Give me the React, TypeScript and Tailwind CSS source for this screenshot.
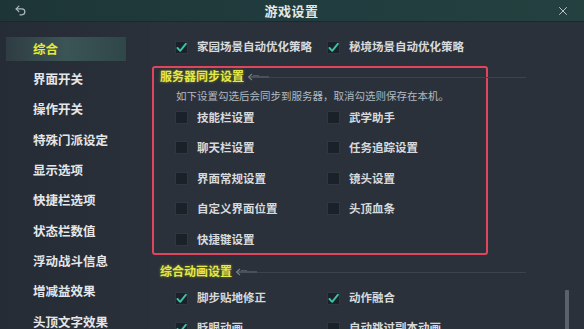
import { Undo2, X } from "lucide-react";

type Opt = { label: string; checked: boolean };

const menu = ["综合", "界面开关", "操作开关", "特殊门派设定", "显示选项", "快捷栏选项", "状态栏数值", "浮动战斗信息", "增减益效果", "头顶文字效果"];

const syncLeft: Opt[] = [
  { label: "技能栏设置", checked: false },
  { label: "聊天栏设置", checked: false },
  { label: "界面常规设置", checked: false },
  { label: "自定义界面位置", checked: false },
  { label: "快捷键设置", checked: false },
];
const syncRight: Opt[] = [
  { label: "武学助手", checked: false },
  { label: "任务追踪设置", checked: false },
  { label: "镜头设置", checked: false },
  { label: "头顶血条", checked: false },
];

function Box({ checked }: { checked: boolean }) {
  return (
    <div className="w-[13px] h-[13px] shrink-0 bg-[#1a2129] border border-[#2f3740] flex items-center justify-center">
      {checked && (
        <svg width="11" height="11" viewBox="0 0 11 11">
          <path d="M1.5 6 L4.2 8.8 L9.8 1.8" fill="none" stroke="#3cc4a4" strokeWidth="1.9" strokeLinecap="round" strokeLinejoin="round" />
        </svg>
      )}
    </div>
  );
}

function Check({ o }: { o: Opt }) {
  return (
    <div className="flex items-center gap-[9px]">
      <Box checked={o.checked} />
      <span className="text-[11.5px] font-semibold text-[#d6dadd] leading-none whitespace-nowrap">{o.label}</span>
    </div>
  );
}

function SectionTitle({ text }: { text: string }) {
  return (
    <div className="flex items-center h-[16px] w-[366px]">
      <span className="text-[12px] font-bold text-[#e4e84a] leading-none [text-shadow:0_0_3px_rgba(170,170,20,0.7)]">{text}</span>
      <svg width="22" height="8" viewBox="0 0 22 8" className="ml-[3px] mt-[2px] shrink-0">
        <path d="M5 1 L1.5 4 L5 7" fill="none" stroke="#7b828a" strokeWidth="1.1" />
        <path d="M2 4 L22 4" stroke="#6b7279" strokeWidth="1" />
        <path d="M6 2.5 L12 2.5" stroke="#5b6269" strokeWidth="0.8" />
      </svg>
      <div className="flex-1 h-px bg-[#3c434c] mt-[2px]" />
    </div>
  );
}

export default function App() {
  return (
    <div className="w-[584px] h-[329px] overflow-hidden bg-[#2b313a] flex flex-col" style={{ fontFamily: '"Noto Sans CJK SC", "Noto Sans", sans-serif' }}>
      <header className="h-[22px] shrink-0 flex items-center justify-between px-[14px] bg-gradient-to-r from-[#1d3536] via-[#213c3e] to-[#24403f] border-b border-[#1a2a2c]">
        <Undo2 size={13} strokeWidth={2.2} className="text-[#aebcbc]" />
        <span className="text-[13px] font-bold text-[#e2e8e8] tracking-[0.5px]">游戏设置</span>
        <X size={14} strokeWidth={1.6} className="text-[#c8d0d0]" />
      </header>

      <div className="flex flex-1 min-h-0">
        <aside className="w-[150px] shrink-0 flex flex-col pt-[12px] bg-gradient-to-r from-[#262c35] to-[#2a3039]">
          {menu.map((m, i) => (
            <div key={m} className="h-[30.3px] shrink-0 flex items-center relative">
              {i === 0 && (
                <div className="absolute left-[6px] w-[120px] top-[3px] bottom-[3px] bg-gradient-to-r from-[#2f3d42] via-[#3b5455] to-[#30474a]" />
              )}
              <span className={`relative pl-[33px] text-[12.5px] font-bold leading-none ${i === 0 ? "text-[#e6e83a]" : "text-[#e4e7ea]"}`}>{m}</span>
            </div>
          ))}
        </aside>

        <main className="flex-1 flex">
          <div className="flex-1 flex flex-col">
            <div className="mt-[15px] h-[20px] shrink-0 flex items-center pl-[25px]">
              <div className="w-[152px]"><Check o={{ label: "家园场景自动优化策略", checked: true }} /></div>
              <Check o={{ label: "秘境场景自动优化策略", checked: true }} />
            </div>

            <div className="mt-[9px] ml-[2px] w-[336px] h-[189px] shrink-0 border-2 border-[#e0455e] rounded-[3px] flex flex-col">
              <div className="pl-[6px] shrink-0">
                <SectionTitle text="服务器同步设置" />
              </div>
              <p className="mt-[6px] h-[12px] shrink-0 pl-[22px] text-[10.5px] leading-[12px] text-[#b3b9bf] whitespace-nowrap">如下设置勾选后会同步到服务器，取消勾选则保存在本机。</p>
              <div className="pl-[21px] shrink-0 grid grid-cols-[152px_1fr]">
                <div className="flex flex-col">
                  {syncLeft.map((o) => (
                    <div key={o.label} className="h-[30.5px] shrink-0 flex items-center"><Check o={o} /></div>
                  ))}
                </div>
                <div className="flex flex-col">
                  {syncRight.map((o) => (
                    <div key={o.label} className="h-[30.5px] shrink-0 flex items-center"><Check o={o} /></div>
                  ))}
                </div>
              </div>
            </div>

            <div className="mt-[8px] pl-[10px] shrink-0">
              <SectionTitle text="综合动画设置" />
            </div>
            <div className="mt-[4px] pl-[25px] shrink-0 grid grid-cols-[152px_1fr]">
              <div className="h-[30px] flex items-center"><Check o={{ label: "脚步贴地修正", checked: true }} /></div>
              <div className="h-[30px] flex items-center"><Check o={{ label: "动作融合", checked: true }} /></div>
              <div className="h-[30px] flex items-center"><Check o={{ label: "眨眼动画", checked: true }} /></div>
              <div className="h-[30px] flex items-center"><Check o={{ label: "自动跳过副本动画", checked: false }} /></div>
            </div>
          </div>
          <div className="w-[19px] shrink-0 flex flex-col">
            <div className="mt-[268px] w-[4px] flex-1 bg-[#5a6169] rounded-t-[1px]" />
          </div>
        </main>
      </div>
    </div>
  );
}
